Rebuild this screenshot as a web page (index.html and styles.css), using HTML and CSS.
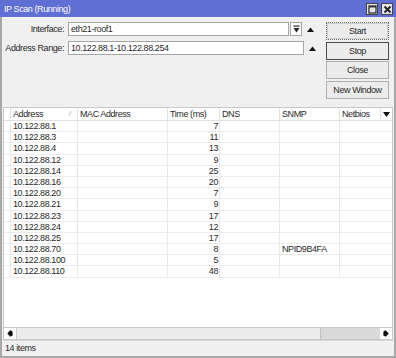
FILE: index.html
```html
<!DOCTYPE html>
<html>
<head>
<meta charset="utf-8">
<link rel="stylesheet" href="styles.css">
</head>
<body>
<div class="window">
  <div class="titlebar">
    <span class="title">IP Scan (Running)</span>
    <div class="tbtns">
      <span class="tbtn"><svg width="9" height="9" viewBox="0 0 9 9"><rect x="1" y="1" width="7" height="7" fill="none" stroke="#222" stroke-width="1.2"/><line x1="1" y1="1.8" x2="8" y2="1.8" stroke="#222" stroke-width="1.2"/></svg></span>
      <span class="tbtn"><svg width="9" height="9" viewBox="0 0 9 9"><path d="M1.5 1.5 L7.5 7.5 M7.5 1.5 L1.5 7.5" stroke="#222" stroke-width="1.8"/></svg></span>
    </div>
  </div>
  <div class="body">
    <div class="top">
      <div class="form">
        <div class="frow">
          <span class="label">Interface:</span>
          <span class="input">eth21-roof1</span>
          <span class="ddbtn"><svg width="7" height="8" viewBox="0 0 7 8"><rect x="0.5" y="0.5" width="6" height="1.2" fill="#222"/><path d="M0.5 3 H6.5 L3.5 7.5 Z" fill="#222"/></svg></span>
          <span class="up"><svg width="7" height="5" viewBox="0 0 7 5"><path d="M0 5 L3.5 0.5 L7 5 Z" fill="#111"/></svg></span>
        </div>
        <div class="frow">
          <span class="label">Address Range:</span>
          <span class="input wide">10.122.88.1-10.122.88.254</span>
          <span class="up"><svg width="7" height="5" viewBox="0 0 7 5"><path d="M0 5 L3.5 0.5 L7 5 Z" fill="#111"/></svg></span>
        </div>
      </div>
      <div class="buttons">
        <span class="btn focus">Start</span>
        <span class="btn default">Stop</span>
        <span class="btn">Close</span>
        <span class="btn">New Window</span>
      </div>
    </div>
    <div class="table">
      <div class="thead">
        <span class="c"></span>
        <span class="c">Address<i class="sort">/</i></span>
        <span class="c">MAC Address</span>
        <span class="c">Time (ms)</span>
        <span class="c">DNS</span>
        <span class="c">SNMP</span>
        <span class="c">Netbios</span>
        <span class="c dd"><svg width="7" height="5" viewBox="0 0 7 5"><path d="M0 0 H7 L3.5 5 Z" fill="#111"/></svg></span>
      </div>
      <div class="tbody">
        <div class="tr"><span></span><span>10.122.88.1</span><span></span><span class="num">7</span><span></span><span></span><span class="last"></span></div>
        <div class="tr"><span></span><span>10.122.88.3</span><span></span><span class="num">11</span><span></span><span></span><span class="last"></span></div>
        <div class="tr"><span></span><span>10.122.88.4</span><span></span><span class="num">13</span><span></span><span></span><span class="last"></span></div>
        <div class="tr"><span></span><span>10.122.88.12</span><span></span><span class="num">9</span><span></span><span></span><span class="last"></span></div>
        <div class="tr"><span></span><span>10.122.88.14</span><span></span><span class="num">25</span><span></span><span></span><span class="last"></span></div>
        <div class="tr"><span></span><span>10.122.88.16</span><span></span><span class="num">20</span><span></span><span></span><span class="last"></span></div>
        <div class="tr"><span></span><span>10.122.88.20</span><span></span><span class="num">7</span><span></span><span></span><span class="last"></span></div>
        <div class="tr"><span></span><span>10.122.88.21</span><span></span><span class="num">9</span><span></span><span></span><span class="last"></span></div>
        <div class="tr"><span></span><span>10.122.88.23</span><span></span><span class="num">17</span><span></span><span></span><span class="last"></span></div>
        <div class="tr"><span></span><span>10.122.88.24</span><span></span><span class="num">12</span><span></span><span></span><span class="last"></span></div>
        <div class="tr"><span></span><span>10.122.88.25</span><span></span><span class="num">17</span><span></span><span></span><span class="last"></span></div>
        <div class="tr"><span></span><span>10.122.88.70</span><span></span><span class="num">8</span><span></span><span>NPID9B4FA</span><span class="last"></span></div>
        <div class="tr"><span></span><span>10.122.88.100</span><span></span><span class="num">5</span><span></span><span></span><span class="last"></span></div>
        <div class="tr"><span></span><span>10.122.88.110</span><span></span><span class="num">48</span><span></span><span></span><span class="last"></span></div>
      </div>
    </div>
    <div class="hscroll">
      <span class="sbtn"><svg width="6" height="7" viewBox="0 0 6 7"><path d="M0.3 3.5 L3.2 0.3 L5.6 1.5 L5.6 5.5 L3.2 6.7 Z" fill="#111"/></svg></span>
      <span class="thumb"></span>
      <span class="track"></span>
      <span class="sbtn"><svg width="6" height="7" viewBox="0 0 6 7"><path d="M5.7 3.5 L2.8 0.3 L0.4 1.5 L0.4 5.5 L2.8 6.7 Z" fill="#111"/></svg></span>
    </div>
    <div class="status">14 items</div>
  </div>
</div>
</body>
</html>
```
FILE: styles.css
```css
html, body {
  margin: 0;
  padding: 0;
  background: #f0f0f0;
}
.window {
  width: 396px;
  height: 358px;
  display: flex;
  flex-direction: column;
  font-family: "Liberation Sans", Arial, sans-serif;
  font-size: 9px;
  letter-spacing: -0.42px;
  color: #2a2a2a;
  box-sizing: border-box;
}
.titlebar {
  height: 17px;
  background: #5f6fd3;
  display: flex;
  align-items: center;
  justify-content: space-between;
  padding: 0 3px 0 4px;
  flex: none;
}
.title {
  color: #fff;
}
.tbtns {
  display: flex;
  gap: 3px;
  margin-top: 1px;
}
.tbtn {
  width: 10px;
  height: 10px;
  background: #e4e4e4;
  border: 1px solid #444;
  display: flex;
  align-items: center;
  justify-content: center;
}
.body {
  flex: 1;
  display: flex;
  flex-direction: column;
  border: 2px solid #a8a8a8;
  border-top: none;
  padding: 0 0 0 1px;
  min-height: 0;
}
.top {
  display: flex;
  height: 90px;
  flex: none;
}
.form {
  flex: 1;
  display: flex;
  flex-direction: column;
  gap: 5px;
  padding-top: 5px;
}
.frow {
  display: flex;
  align-items: center;
  height: 14px;
}
.label {
  width: 61px;
  text-align: right;
  margin-right: 4px;
  white-space: nowrap;
}
.input {
  width: 221px;
  height: 14px;
  background: #fff;
  border: 1px solid #a5a5a5;
  box-sizing: border-box;
  padding-left: 2px;
  line-height: 12px;
  white-space: nowrap;
}
.input.wide {
  width: 236px;
}
.ddbtn {
  width: 12px;
  height: 14px;
  margin-left: 1px;
  background: #fff;
  border: 1px solid #a5a5a5;
  box-sizing: border-box;
  display: flex;
  align-items: center;
  justify-content: center;
}
.up {
  margin-left: 5px;
  display: flex;
  align-items: center;
}
.buttons {
  width: 63px;
  margin-right: 5px;
  padding-top: 5px;
  display: flex;
  flex-direction: column;
  gap: 1.5px;
}
.btn {
  height: 18px;
  box-sizing: border-box;
  border: 1px solid #adadad;
  background: #ececec;
  display: flex;
  align-items: center;
  justify-content: center;
  white-space: nowrap;
}
.btn.focus {
  border: 1px dotted #707070;
  outline: 1px solid #cfcfcf;
  outline-offset: -2px;
}
.btn.default {
  border: 1px solid #4a4a4a;
}
.table {
  flex: 1;
  background: #fff;
  border: 1px solid #c8c8c8;
  border-bottom: none;
  margin-right: 1px;
  min-height: 0;
}
.thead {
  display: grid;
  grid-template-columns: 7px 67px 90px 52px 60px 60px 41px 1fr;
  height: 13px;
  border-bottom: 1px solid #e0e0e0;
  box-sizing: border-box;
}
.thead .c {
  border-right: 1px solid #e3e3e3;
  padding-left: 2px;
  line-height: 12px;
  position: relative;
  white-space: nowrap;
  overflow: hidden;
}
.thead .c:first-child {
  padding: 0;
}
.thead .c.dd {
  border-right: none;
  padding: 0;
  display: flex;
  align-items: center;
  justify-content: center;
}
.sort {
  position: absolute;
  left: 58px;
  top: 0;
  color: #999;
  font-size: 7px;
}
.tr {
  display: grid;
  grid-template-columns: 7px 67px 90px 52px 60px 60px 1fr;
  height: 11.2px;
  border-bottom: 1px solid #ececec;
  box-sizing: border-box;
}
.tr span {
  border-right: 1px solid #e8e8e8;
  padding-left: 2px;
  line-height: 10.5px;
  white-space: nowrap;
}
.tr span:first-child {
  padding: 0;
}
.tr span.last {
  border-right: none;
}
.tr span.num {
  text-align: right;
  padding: 0 1px 0 0;
}
.hscroll {
  height: 13px;
  flex: none;
  display: flex;
  border: 1px solid #c8c8c8;
  box-sizing: border-box;
  margin-right: 1px;
  background: #fff;
}
.sbtn {
  width: 12px;
  display: flex;
  align-items: center;
  justify-content: center;
  background: #fff;
}
.thumb {
  flex: 1;
  background: #ececec;
  border-left: 1px solid #d0d0d0;
  border-right: 1px solid #c0c0c0;
}
.track {
  width: 59px;
  background: #dadada;
}
.status {
  height: 15px;
  flex: none;
  line-height: 15px;
  padding-left: 2px;
  border-top: 1px solid #d8d8d8;
}
```
